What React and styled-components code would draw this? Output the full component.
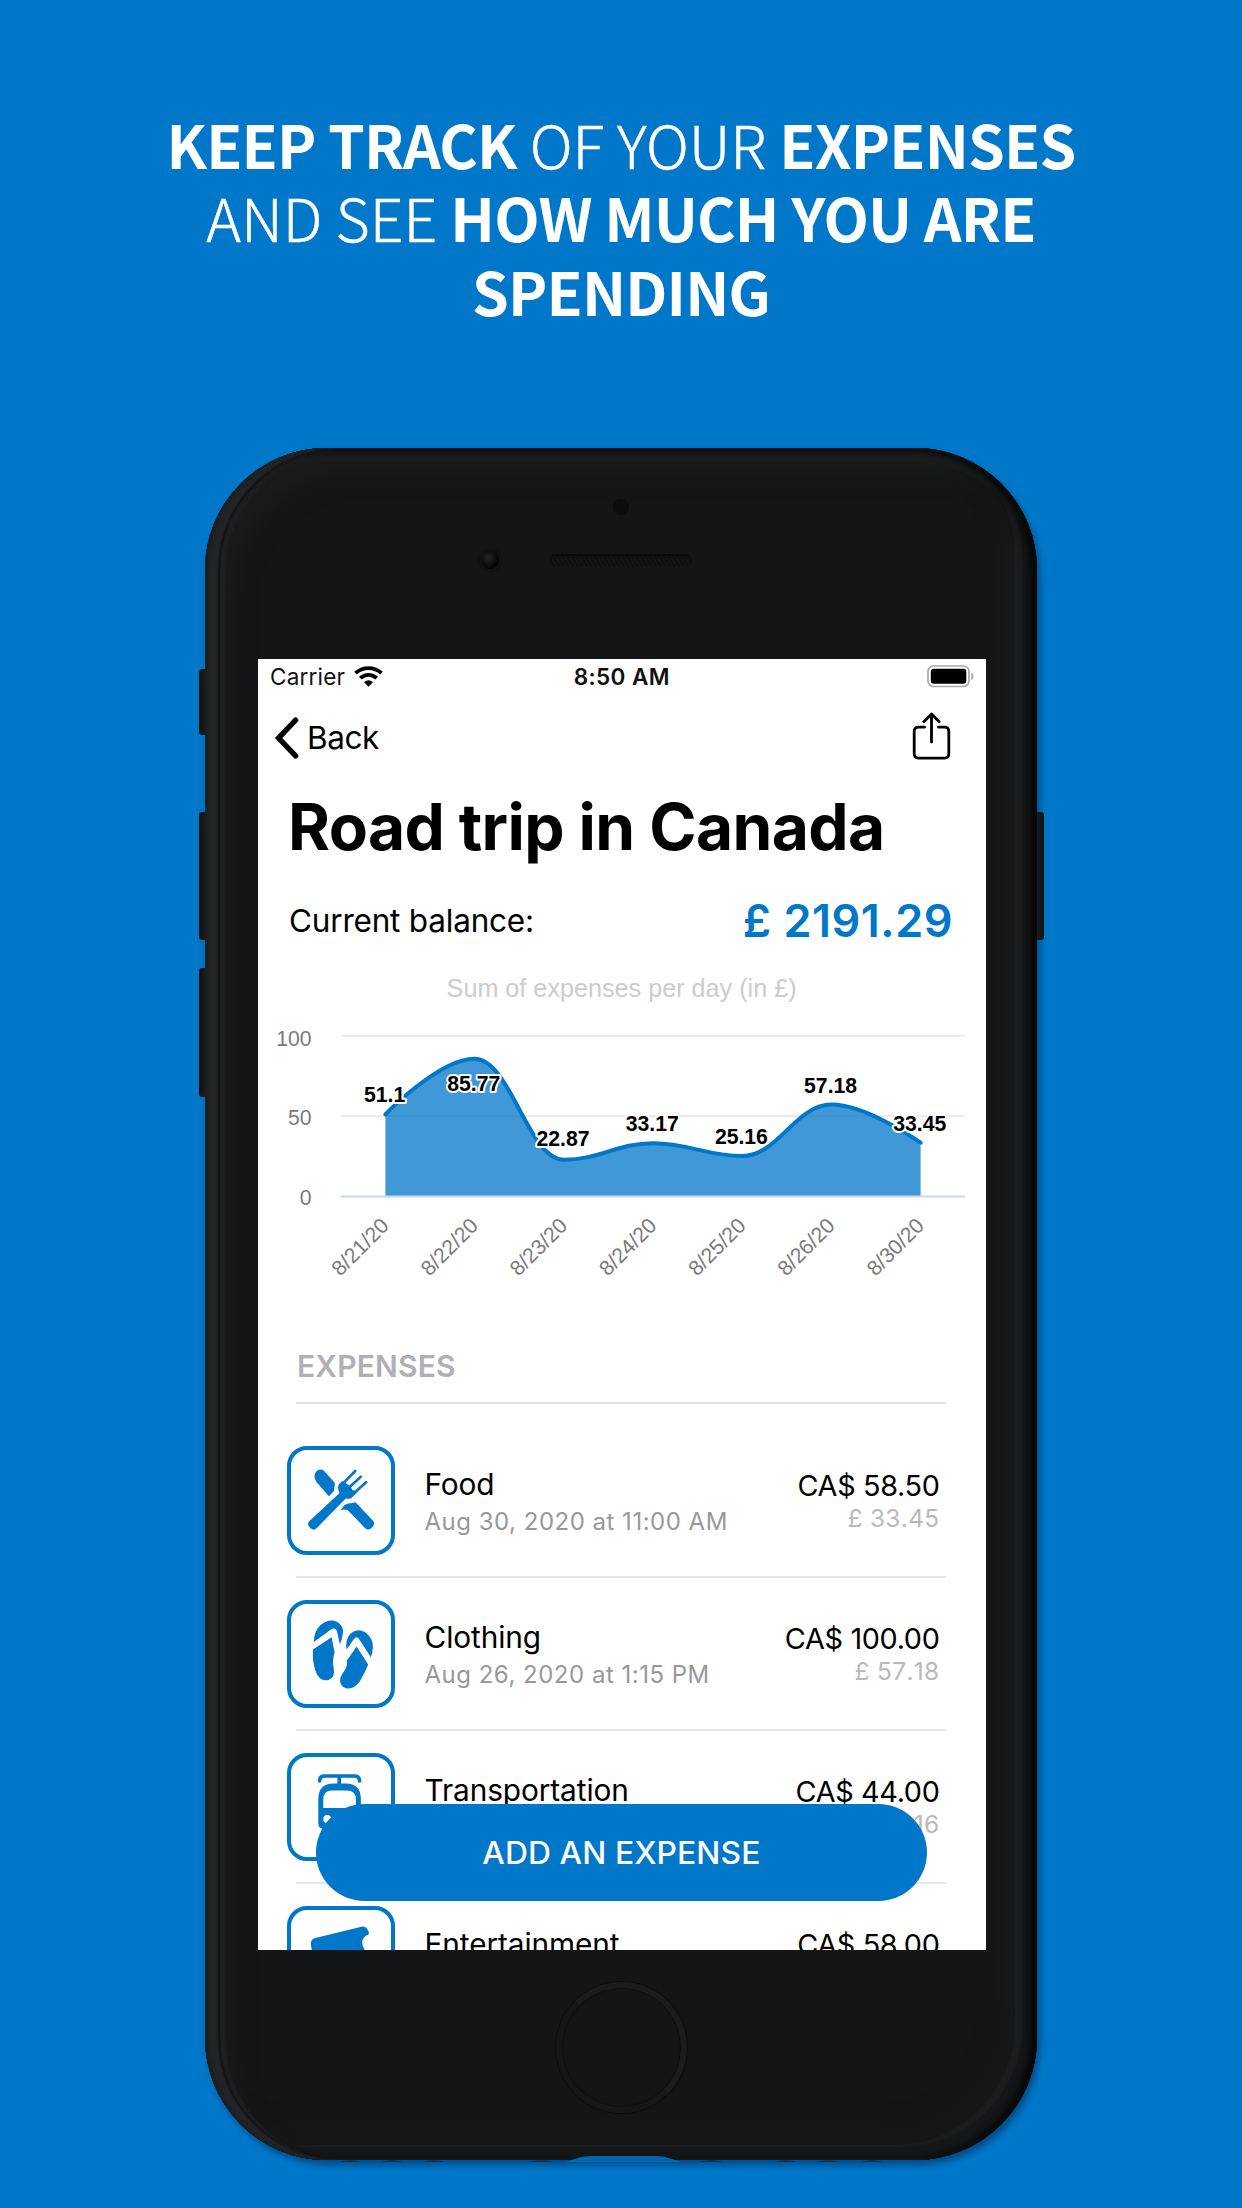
import React from "react";
import styled, { createGlobalStyle } from "styled-components";

const BLUE = "#0077c8";
const UI = `Inter, "Liberation Sans", sans-serif`;
const CHART = `"Liberation Sans", Arial, sans-serif`;

const GlobalStyle = createGlobalStyle`
  html, body { margin: 0; padding: 0; background: ${BLUE}; }
  * { box-sizing: border-box; }
`;

const Page = styled.main`
  width: 1242px;
  height: 2208px;
  overflow: hidden;
  display: flex;
  flex-direction: column;
  align-items: center;
  background: ${BLUE};
`;

const Headline = styled.h1`
  margin: 0;
  height: 448px;
  padding-top: 107px;
  color: #fff;
  font-family: "Noto Sans CJK SC", "Open Sans", sans-serif;
  font-size: 59px;
  font-weight: 300;
  line-height: 73.4px;
  text-align: center;
  white-space: nowrap;
  -webkit-text-stroke: 0.5px #fff;
  strong {
    font-weight: 700;
    letter-spacing: -0.85px;
    -webkit-text-stroke: 0;
  }
`;

const Line = styled.span`
  display: block;
`;

const Phone = styled.section`
  position: relative;
  flex: none;
  width: 832px;
  height: 1712px;
  padding: 211px 51.5px 0 53px;
  border-radius: 122px;
  background: #141517;
  box-shadow:
    inset 4px 0 6px #1b1d1e,
    inset 13px 0 2px #242628,
    inset 15px 0 1px #101112,
    inset -8px 0 10px #060707,
    inset 0 3px 4px #101111,
    inset 0 14px 3px #1b1c1c,
    inset 21px 2px 2px #1d1f20,
    inset -14px -13px 1px #161718,
    inset -22px -15px 1px #1b1c1d,
    inset 28px 26px 22px #1a1b1b,
    inset -34px -30px 22px #181818,
    3px 5px 6px rgba(0, 25, 60, 0.45);
`;

const SideKey = styled.i`
  position: absolute;
  z-index: -1;
  top: ${(p) => p.$top}px;
  ${(p) => (p.$right ? "right: -6.5px;" : "left: -6.5px;")}
  width: 14px;
  height: ${(p) => p.$h}px;
  border-radius: 3px;
  background: linear-gradient(90deg, #0c0d0d, #1f2122 50%, #0c0d0d);
`;

const Stage = styled.div`
  position: relative;
  z-index: 0;
`;

const Sensor = styled.i`
  position: absolute;
  left: 408px;
  top: 51px;
  width: 16px;
  height: 16px;
  border-radius: 50%;
  background: #0b0d0d;
`;

const Camera = styled.i`
  position: absolute;
  left: 275.5px;
  top: 103px;
  width: 18px;
  height: 18px;
  border-radius: 50%;
  background: radial-gradient(circle at 42% 38%, #262728, #0c0d0d 45%, #000 75%);
  box-shadow: 0 0 0 3px #101212;
`;

const Speaker = styled.i`
  position: absolute;
  left: 344px;
  top: 106px;
  width: 143px;
  height: 13px;
  border-radius: 7px;
  background: repeating-linear-gradient(60deg, #0f1010 0 2px, #141515 2px 4px);
  box-shadow: inset 0 2px 2px #090a0a;
`;

const HomeButton = styled.i`
  position: absolute;
  left: 350.5px;
  top: 1533.5px;
  width: 131px;
  height: 131px;
  border-radius: 50%;
  border: 6.5px solid #1b1c1d;
  border-left-color: #151617;
  border-bottom-color: #161717;
  box-shadow: 0 0 0 1px #0c0d0d, inset 0 0 0 1px #0e0f0f;
`;

const BottomEdge = styled.svg`
  position: absolute;
  left: 110px;
  top: 1705px;
`;

const Screen = styled.div`
  position: relative;
  display: flex;
  flex-direction: column;
  height: 1290.5px;
  overflow: hidden;
  background: #fff;
  color: #000;
  font-family: ${UI};
`;

const StatusBar = styled.div`
  flex: none;
  height: 34px;
  padding: 0 12px 0 12px;
  display: grid;
  grid-template-columns: 1fr auto 1fr;
  align-items: center;
  font-size: 22.5px;
  color: #111;
`;

const Carrier = styled.span`
  display: flex;
  align-items: center;
  gap: 9px;
  letter-spacing: 0.2px;
`;

const Clock = styled.span`
  font-weight: 600;
  letter-spacing: 0.4px;
`;

const BatteryIcon = styled.svg`
  justify-self: end;
`;

const NavBar = styled.div`
  flex: none;
  height: 89px;
  padding: 0 35px 0 15px;
  display: flex;
  align-items: center;
  justify-content: space-between;
`;

const ShareIcon = styled.svg`
  margin-bottom: 3px;
`;

const Back = styled.span`
  display: flex;
  align-items: center;
  gap: 8px;
  font-size: 31.5px;
  letter-spacing: -0.4px;
`;

const Title = styled.h2`
  flex: none;
  margin: 0;
  padding-left: 30px;
  height: 90px;
  line-height: 90px;
  font-size: 64px;
  font-weight: 700;
  letter-spacing: -0.6px;
  white-space: nowrap;
`;

const Balance = styled.div`
  flex: none;
  height: 96px;
  padding: 0 32.5px 0 31px;
  display: flex;
  align-items: center;
  justify-content: space-between;
  font-size: 31.5px;
  letter-spacing: -0.2px;
`;

const BalanceValue = styled.span`
  color: ${BLUE};
  font-size: 45px;
  font-weight: 600;
  letter-spacing: 0.5px;
`;

const ChartSvg = styled.svg`
  flex: none;
  display: block;
  width: 728px;
  height: 352px;
  font-family: ${CHART};
`;

const SectionHeader = styled.div`
  flex: none;
  height: 84px;
  margin: 0 39.5px 0 38px;
  padding: 10px 0 0 1px;
  display: flex;
  align-items: center;
  border-bottom: 2px solid #e3e3e3;
  color: #b0b0b4;
  font-size: 30px;
  font-weight: 600;
  letter-spacing: 0.2px;
`;

const List = styled.ul`
  flex: none;
  list-style: none;
  margin: 0;
  padding: 20.5px 39.5px 0 38px;
`;

const Row = styled.li`
  height: 153.2px;
  display: flex;
  align-items: center;
  border-bottom: 2px solid #e6e6e6;
`;

const IconBox = styled.span`
  flex: none;
  width: 108.5px;
  height: 108.5px;
  margin: 1px 0 0 -9.5px;
  border: 4px solid ${BLUE};
  border-radius: 20px;
  svg { display: block; margin: -4px; }
`;

const Info = styled.div`
  flex: 1;
  margin-left: 29.5px;
  padding-top: 6px;
  line-height: 37px;
  white-space: nowrap;
`;

const Name = styled.div`
  font-size: 29.8px;
  letter-spacing: -0.1px;
`;

const When = styled.div`
  font-size: 24px;
  color: #98989c;
  letter-spacing: 0.5px;
`;

const Money = styled.div`
  padding: 4px 6.5px 0 0;
  text-align: right;
  line-height: 32.4px;
  white-space: nowrap;
`;

const Amount = styled.div`
  font-size: 28.8px;
  letter-spacing: -0.35px;
`;

const Converted = styled.div`
  font-size: 24.5px;
  color: #b9b9bb;
  letter-spacing: 0.3px;
  font-kerning: none;
`;

const AddButton = styled.button`
  position: absolute;
  left: 58px;
  top: 1145.3px;
  width: 610.7px;
  height: 97px;
  border: 0;
  border-radius: 48.5px;
  background: ${BLUE};
  color: #fff;
  font: 500 31.8px ${UI};
  letter-spacing: 0.1px;
`;

const days = [
  ["8/21/20", 51.1],
  ["8/22/20", 85.77],
  ["8/23/20", 22.87],
  ["8/24/20", 33.17],
  ["8/25/20", 25.16],
  ["8/26/20", 57.18],
  ["8/30/20", 33.45],
];

const BASE = 1196.5;
const points = days.map(([day, value], i) => ({
  day,
  value,
  x: 385.4 + i * 89.2,
  y: BASE - value * 1.607,
}));

// Smoothed spline whose control points never overshoot the neighbouring values.
function splinePath(pts) {
  let d = `M${pts[0].x} ${pts[0].y}`;
  let out = pts[0];
  for (let i = 1; i < pts.length; i++) {
    const prev = pts[i - 1];
    const p = pts[i];
    const next = pts[i + 1];
    let left = p;
    let right = p;
    if (next) {
      const lx = (1.5 * p.x + prev.x) / 2.5;
      let ly = (1.5 * p.y + prev.y) / 2.5;
      const rx = (1.5 * p.x + next.x) / 2.5;
      let ry = (1.5 * p.y + next.y) / 2.5;
      const fix = ((ry - ly) * (rx - p.x)) / (rx - lx) + p.y - ry;
      ly += fix;
      ry += fix;
      if (ly > prev.y && ly > p.y) {
        ly = Math.max(prev.y, p.y);
        ry = 2 * p.y - ly;
      } else if (ly < prev.y && ly < p.y) {
        ly = Math.min(prev.y, p.y);
        ry = 2 * p.y - ly;
      }
      if (ry > next.y && ry > p.y) {
        ry = Math.max(next.y, p.y);
        ly = 2 * p.y - ry;
      } else if (ry < next.y && ry < p.y) {
        ry = Math.min(next.y, p.y);
        ly = 2 * p.y - ry;
      }
      left = { x: lx, y: ly };
      right = { x: rx, y: ry };
    }
    d += ` C${out.x} ${out.y} ${left.x} ${left.y} ${p.x} ${p.y}`;
    out = right;
  }
  return d;
}

function ExpenseChart() {
  const line = splinePath(points);
  const last = points[points.length - 1];
  return (
    <ChartSvg viewBox="258 968 728 352">
      <text x="621.6" y="997.3" textAnchor="middle" fontSize="25.2" fill="#cccccc">
        Sum of expenses per day (in £)
      </text>
      <path d="M340.7 1035.7H965M340.7 1116H965" stroke="#ebebeb" strokeWidth="2" />
      {[100, 50, 0].map((v, i) => (
        <text key={v} x="311.5" y={1045.7 + i * 79.7} textAnchor="end" fontSize="21.2" fill="#7a7a7a">
          {v}
        </text>
      ))}
      <path d={`${line} L${last.x} ${BASE} L${points[0].x} ${BASE}Z`} fill={BLUE} fillOpacity="0.75" />
      <path d="M340.7 1196.5H965" stroke="#ccd6eb" strokeWidth="2" />
      <path d={line} fill="none" stroke={BLUE} strokeWidth="4" strokeLinecap="round" />
      {points.map((p, i) => (
        <text
          key={p.day}
          x={p.x - 0.8}
          y={i === 1 ? 1090.7 : p.y - 12 + (i === 2 ? -1.5 : 0)}
          textAnchor="middle"
          fontSize="21.2"
          fontWeight="700"
          fill="#000"
          stroke="#fff"
          strokeWidth="4"
          strokeLinejoin="round"
          paintOrder="stroke"
        >
          {p.value}
        </text>
      ))}
      {points.map((p) => (
        <text
          key={p.day}
          transform={`translate(${p.x + 4.8} 1227) rotate(-45)`}
          textAnchor="end"
          fontSize="21.2"
          fill="#7a7a7a"
        >
          {p.day}
        </text>
      ))}
    </ChartSvg>
  );
}

const FoodIcon = () => (
  <svg width="108.5" height="108.5" viewBox="80 349 326 326" fill={BLUE}>
    <path d="M167 426Q178 415 191 423L224 460L221 484L206 500L169 458Q157 440 167 426Z" />
    <path d="M241 541L253 526Q262 520 273 521L286 518L339 574Q344 582 339 590L331 598Q323 603 315 596L262 541Q252 538 241 541Z" />
    <path d="M236 464L246 454L262 464L272 472L277 482L292 485L277 502Q267 511 257 506L169 596Q160 604 152 597Q138 588 146 576L238 490Q230 475 236 464Z" />
    <path d="M242 468L285 424M258 482L302 441M274 497L318 458" stroke={BLUE} strokeWidth="8" strokeLinecap="round" />
  </svg>
);

const ClothingIcon = () => (
  <svg width="108.5" height="108.5" viewBox="80 808 326 326" fill={BLUE}>
    <path d="M161 934Q160 904 180 884Q205 862 230 873Q251 885 248 908Q246 925 239 942L230 901Q224 889 212 897Z" />
    <path d="M158 957L214 920Q219 945 223 966Q215 990 220 1010Q226 1042 205 1048Q178 1055 166 1022Q156 995 158 957Z" />
    <path d="M259 957Q254 925 272 908Q292 892 315 905Q340 925 338 950Q337 968 332 980L297 926Q289 915 281 925Z" />
    <path d="M289 948L324 1002Q315 1025 299 1052Q280 1078 258 1073Q234 1065 241 1040Q246 1028 256 1015Q262 1003 260 990Z" />
  </svg>
);

const TramIcon = () => (
  <svg width="108.5" height="108.5" viewBox="80 98 326 326" fill={BLUE}>
    <path d="M178 182Q178 167 192 167H284Q297 167 298 182M237 167V198" fill="none" stroke={BLUE} strokeWidth="11" strokeLinecap="round" />
    <path
      fillRule="evenodd"
      d="M174 237Q174 190 220 190H256Q302 190 302 237V308Q302 326 284 326H192Q174 326 174 308ZM189 263H287V238Q287 211 260 211H216Q189 211 189 238ZM189 296a12 12 0 1 0 24 0a12 12 0 1 0 -24 0ZM263 296a12 12 0 1 0 24 0a12 12 0 1 0 -24 0Z"
    />
  </svg>
);

const TicketIcon = () => (
  <svg width="108.5" height="108.5" viewBox="80 559 326 326" fill={BLUE}>
    <path d="M152 676Q149 659 165 655L304 621Q318 619 326 637L325 645Q307 652 306 668Q306 680 312 687L322 760H165Z" />
  </svg>
);

const expenses = [
  { icon: FoodIcon, name: "Food", when: "Aug 30, 2020 at 11:00 AM", amount: "CA$ 58.50", converted: "£ 33.45" },
  { icon: ClothingIcon, name: "Clothing", when: "Aug 26, 2020 at 1:15 PM", amount: "CA$ 100.00", converted: "£ 57.18" },
  { icon: TramIcon, name: "Transportation", when: "", amount: "CA$ 44.00", converted: "£ 25.16" },
  { icon: TicketIcon, name: "Entertainment", when: "", amount: "CA$ 58.00", converted: "" },
];

export default function App() {
  return (
    <Page>
      <GlobalStyle />
      <Headline>
        <Line><strong>KEEP TRACK</strong> OF YOUR <strong>EXPENSES</strong></Line>
        <Line>AND SEE <strong>HOW MUCH YOU ARE</strong></Line>
        <Line><strong>SPENDING</strong></Line>
      </Headline>
      <Stage>
        <SideKey $top={221} $h={66} />
        <SideKey $top={364} $h={128} />
        <SideKey $top={520} $h={129} />
        <SideKey $right $top={364} $h={128} />
        <Phone>
          <Sensor />
          <Camera />
          <Speaker />
          <Screen>
            <StatusBar>
              <Carrier>
                Carrier
                <svg width="29" height="21" viewBox="0 0 29 21" fill="none" stroke="#000" strokeWidth="3.8">
                  <path d="M1.5 7.2C8.5 0.3 20.5 0.3 27.5 7.2" />
                  <path d="M6.3 12.2C11 7.7 18 7.7 22.7 12.2" />
                  <path d="M10 16Q14.5 12.400 19 16L14.5 20.700Z" fill="#000" stroke="none" />
                </svg>
              </Carrier>
              <Clock>8:50 AM</Clock>
              <BatteryIcon width="47" height="23" viewBox="0 0 47 23">
                <rect x="1" y="1" width="41" height="20.5" rx="5.5" fill="none" stroke="#a8a8a8" strokeWidth="1.7" />
                <rect x="3.8" y="3.8" width="35.5" height="15" rx="3" />
                <path d="M44.3 7.5Q46.5 8.5 46.5 11.2Q46.5 14 44.3 15Z" fill="#a8a8a8" />
              </BatteryIcon>
            </StatusBar>
            <NavBar>
              <Back>
                <svg width="26" height="44" viewBox="0 0 26 44" fill="none" stroke="#000" strokeWidth="5.4" strokeLinecap="round" strokeLinejoin="miter">
                  <path d="M22.6 4.2L5.6 22L22.6 39.8" />
                </svg>
                Back
              </Back>
              <ShareIcon width="40" height="48" viewBox="0 0 40 48" fill="none" stroke="#000" strokeWidth="2.8" strokeLinecap="round" strokeLinejoin="round">
                <path d="M13.5 15.2H7.5Q3.200 15.2 3.2 19.500V41.8Q3.2 46.1 7.5 46.1H33.5Q37.8 46.1 37.8 41.8V19.500Q37.8 15.2 33.5 15.2H27.5" />
                <path d="M20.5 30V2.5M12.8 9.8L20.5 2.1L28.2 9.8" />
              </ShareIcon>
            </NavBar>
            <Title>Road trip in Canada</Title>
            <Balance>
              <span>Current balance:</span>
              <BalanceValue>£ 2191.29</BalanceValue>
            </Balance>
            <ExpenseChart />
            <SectionHeader>EXPENSES</SectionHeader>
            <List>
              {expenses.map(({ icon: Icon, name, when, amount, converted }) => (
                <Row key={name}>
                  <IconBox><Icon /></IconBox>
                  <Info>
                    <Name>{name}</Name>
                    <When>{when || "\u00a0"}</When>
                  </Info>
                  <Money>
                    <Amount>{amount}</Amount>
                    <Converted>{converted || "\u00a0"}</Converted>
                  </Money>
                </Row>
              ))}
            </List>
            <AddButton>ADD AN EXPENSE</AddButton>
          </Screen>
          <HomeButton />
          <BottomEdge width="612" height="9" viewBox="0 0 612 9" fill={BLUE}>
            <path d="M250 9L263 5Q268 3 278 3H340Q350 3 354 5L366 9Z" fill="#0068ad" />
            <path d="M24 9q11 -4 22 0ZM66 9q11 -4 22 0ZM108 9q11 -4 22 0ZM214 9q12 -4 24 0ZM384 9q12 -4 24 0ZM460 9q11 -4 22 0ZM502 9q11 -4 22 0ZM546 9q11 -4 22 0Z" fill="#04355c" />
          </BottomEdge>
        </Phone>
      </Stage>
    </Page>
  );
}
